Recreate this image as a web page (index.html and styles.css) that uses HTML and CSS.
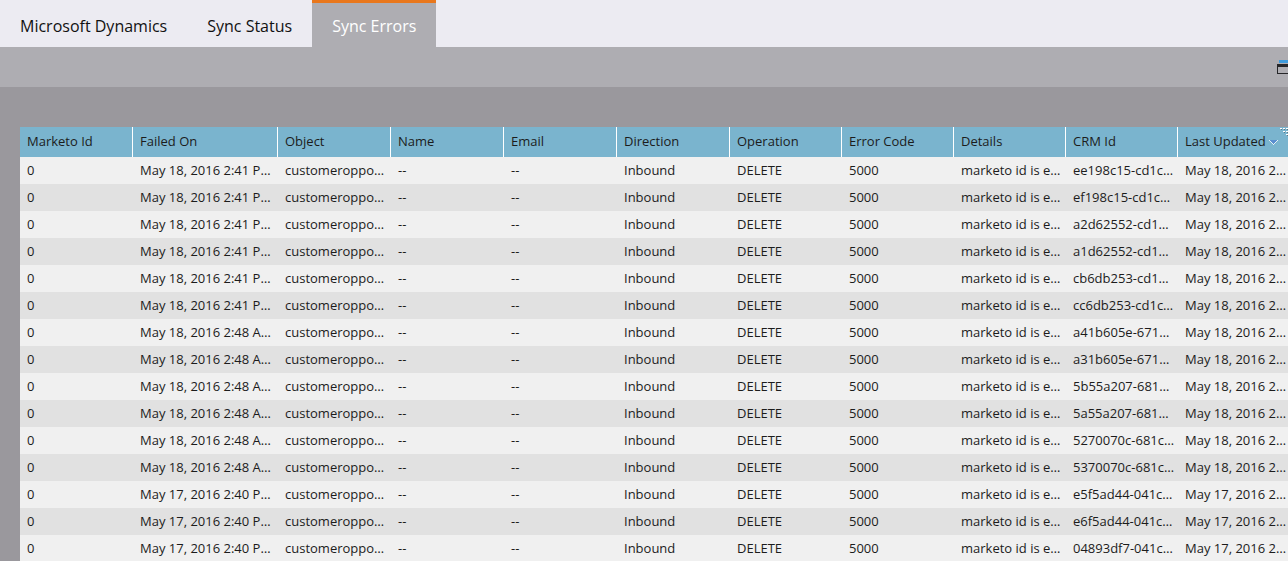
FILE: index.html
```
<!DOCTYPE html>
<html lang="en">
<head>
<meta charset="utf-8">
<title>Sync Errors</title>
<link rel="stylesheet" href="styles.css">
</head>
<body>
<nav class="tabs">
  <a class="tab">Microsoft Dynamics</a>
  <a class="tab">Sync Status</a>
  <a class="tab active">Sync Errors</a>
</nav>
<div class="toolbar">
  <svg class="export" width="11" height="14" viewBox="0 0 11 14" shape-rendering="crispEdges"><path fill="#3f9bdc" d="M2 0h9v3H2z"/><path fill="#262629" d="M0 4h11v3H1v6h10v1H0z"/></svg>
</div>
<main class="panel">
  <div class="grid">
    <div class="row head"><span>Marketo Id</span><span>Failed On</span><span>Object</span><span>Name</span><span>Email</span><span>Direction</span><span>Operation</span><span>Error Code</span><span>Details</span><span>CRM Id</span><span class="sorted">Last Updated<svg class="arrow" width="9" height="5" viewBox="0 0 9 5" shape-rendering="crispEdges"><path fill="#5b8fd0" d="M1 0h7v1H7v1H6v1H5v1H4V3H3V2H2V1H1z"/><path fill="#e4f0f6" d="M0 0h1v1H0zM1 1h1v1H1zM2 2h1v1H2zM3 3h1v1H3zM4 4h1v1H4zM5 3h1v1H5zM6 2h1v1H6zM7 1h1v1H7zM8 0h1v1H8z"/></svg></span>
      <svg class="grip" width="8" height="9" viewBox="0 0 8 9" shape-rendering="crispEdges"><path fill="#5f7780" d="M1 1h1v1H1zM4 1h1v1H4zM7 1h1v1H7zM4 4h1v1H4zM7 4h1v1H7zM7 7h1v1H7z"/><path fill="#fff" d="M0 0h2v1H0zM3 0h2v1H3zM6 0h2v1H6zM3 3h2v1H3zM6 3h2v1H6zM6 6h2v1H6z"/></svg>
    </div>
    <div class="row"><span>0</span><span>May 18, 2016 2:41 P…</span><span>customeroppo…</span><span>--</span><span>--</span><span>Inbound</span><span>DELETE</span><span>5000</span><span>marketo id is e…</span><span>ee198c15-cd1c…</span><span>May 18, 2016 2…</span></div>
    <div class="row"><span>0</span><span>May 18, 2016 2:41 P…</span><span>customeroppo…</span><span>--</span><span>--</span><span>Inbound</span><span>DELETE</span><span>5000</span><span>marketo id is e…</span><span>ef198c15-cd1c…</span><span>May 18, 2016 2…</span></div>
    <div class="row"><span>0</span><span>May 18, 2016 2:41 P…</span><span>customeroppo…</span><span>--</span><span>--</span><span>Inbound</span><span>DELETE</span><span>5000</span><span>marketo id is e…</span><span>a2d62552-cd1…</span><span>May 18, 2016 2…</span></div>
    <div class="row"><span>0</span><span>May 18, 2016 2:41 P…</span><span>customeroppo…</span><span>--</span><span>--</span><span>Inbound</span><span>DELETE</span><span>5000</span><span>marketo id is e…</span><span>a1d62552-cd1…</span><span>May 18, 2016 2…</span></div>
    <div class="row"><span>0</span><span>May 18, 2016 2:41 P…</span><span>customeroppo…</span><span>--</span><span>--</span><span>Inbound</span><span>DELETE</span><span>5000</span><span>marketo id is e…</span><span>cb6db253-cd1…</span><span>May 18, 2016 2…</span></div>
    <div class="row"><span>0</span><span>May 18, 2016 2:41 P…</span><span>customeroppo…</span><span>--</span><span>--</span><span>Inbound</span><span>DELETE</span><span>5000</span><span>marketo id is e…</span><span>cc6db253-cd1c…</span><span>May 18, 2016 2…</span></div>
    <div class="row"><span>0</span><span>May 18, 2016 2:48 A…</span><span>customeroppo…</span><span>--</span><span>--</span><span>Inbound</span><span>DELETE</span><span>5000</span><span>marketo id is e…</span><span>a41b605e-671…</span><span>May 18, 2016 2…</span></div>
    <div class="row"><span>0</span><span>May 18, 2016 2:48 A…</span><span>customeroppo…</span><span>--</span><span>--</span><span>Inbound</span><span>DELETE</span><span>5000</span><span>marketo id is e…</span><span>a31b605e-671…</span><span>May 18, 2016 2…</span></div>
    <div class="row"><span>0</span><span>May 18, 2016 2:48 A…</span><span>customeroppo…</span><span>--</span><span>--</span><span>Inbound</span><span>DELETE</span><span>5000</span><span>marketo id is e…</span><span>5b55a207-681…</span><span>May 18, 2016 2…</span></div>
    <div class="row"><span>0</span><span>May 18, 2016 2:48 A…</span><span>customeroppo…</span><span>--</span><span>--</span><span>Inbound</span><span>DELETE</span><span>5000</span><span>marketo id is e…</span><span>5a55a207-681…</span><span>May 18, 2016 2…</span></div>
    <div class="row"><span>0</span><span>May 18, 2016 2:48 A…</span><span>customeroppo…</span><span>--</span><span>--</span><span>Inbound</span><span>DELETE</span><span>5000</span><span>marketo id is e…</span><span>5270070c-681c…</span><span>May 18, 2016 2…</span></div>
    <div class="row"><span>0</span><span>May 18, 2016 2:48 A…</span><span>customeroppo…</span><span>--</span><span>--</span><span>Inbound</span><span>DELETE</span><span>5000</span><span>marketo id is e…</span><span>5370070c-681c…</span><span>May 18, 2016 2…</span></div>
    <div class="row"><span>0</span><span>May 17, 2016 2:40 P…</span><span>customeroppo…</span><span>--</span><span>--</span><span>Inbound</span><span>DELETE</span><span>5000</span><span>marketo id is e…</span><span>e5f5ad44-041c…</span><span>May 17, 2016 2…</span></div>
    <div class="row"><span>0</span><span>May 17, 2016 2:40 P…</span><span>customeroppo…</span><span>--</span><span>--</span><span>Inbound</span><span>DELETE</span><span>5000</span><span>marketo id is e…</span><span>e6f5ad44-041c…</span><span>May 17, 2016 2…</span></div>
    <div class="row"><span>0</span><span>May 17, 2016 2:40 P…</span><span>customeroppo…</span><span>--</span><span>--</span><span>Inbound</span><span>DELETE</span><span>5000</span><span>marketo id is e…</span><span>04893df7-041c…</span><span>May 17, 2016 2…</span></div>
  </div>
</main>
</body>
</html>
```
FILE: styles.css
```
* { box-sizing: border-box; }
body {
  margin: 0;
  height: 561px;
  overflow: hidden;
  display: flex;
  flex-direction: column;
  background: #9a989d;
  color: #1c1c1c;
  font: 13px/27px "Open Sans", "Noto Sans", sans-serif;
}
.tabs {
  display: flex;
  flex: none;
  height: 47px;
  background: #ecebf2;
}
.tab {
  padding: 3px 20px 0;
  border-top: 3px solid transparent;
  font-size: 16px;
  line-height: 40px;
  color: #111;
  white-space: nowrap;
}
.tab.active {
  border-top-color: #e9771c;
  background: #aeadb2;
  color: #fff;
}
.toolbar {
  flex: none;
  display: flex;
  justify-content: flex-end;
  height: 40px;
  padding-top: 13px;
  background: #aeadb2;
}
.export { display: block; }
.panel {
  flex: 1;
  min-height: 0;
  padding: 40px 0 0 20px;
}
.row {
  display: grid;
  grid-template-columns: 113px 145px repeat(4, 113px) repeat(4, 112px) 110px;
  height: 27px;
  background: #f0f0f0;
}
.row:nth-child(odd) { background: #e1e1e1; }
.row span {
  padding-left: 7px;
  white-space: nowrap;
  overflow: hidden;
}
.row.head {
  position: relative;
  height: 30px;
  line-height: 29px;
  background: #7ab4ce;
}
.head span { border-right: 1px solid #fff; }
.head .sorted { border-right: 0; }
.arrow {
  margin-left: 3px;
  vertical-align: 1px;
}
.grip {
  position: absolute;
  top: 1px;
  right: 0;
}
```
